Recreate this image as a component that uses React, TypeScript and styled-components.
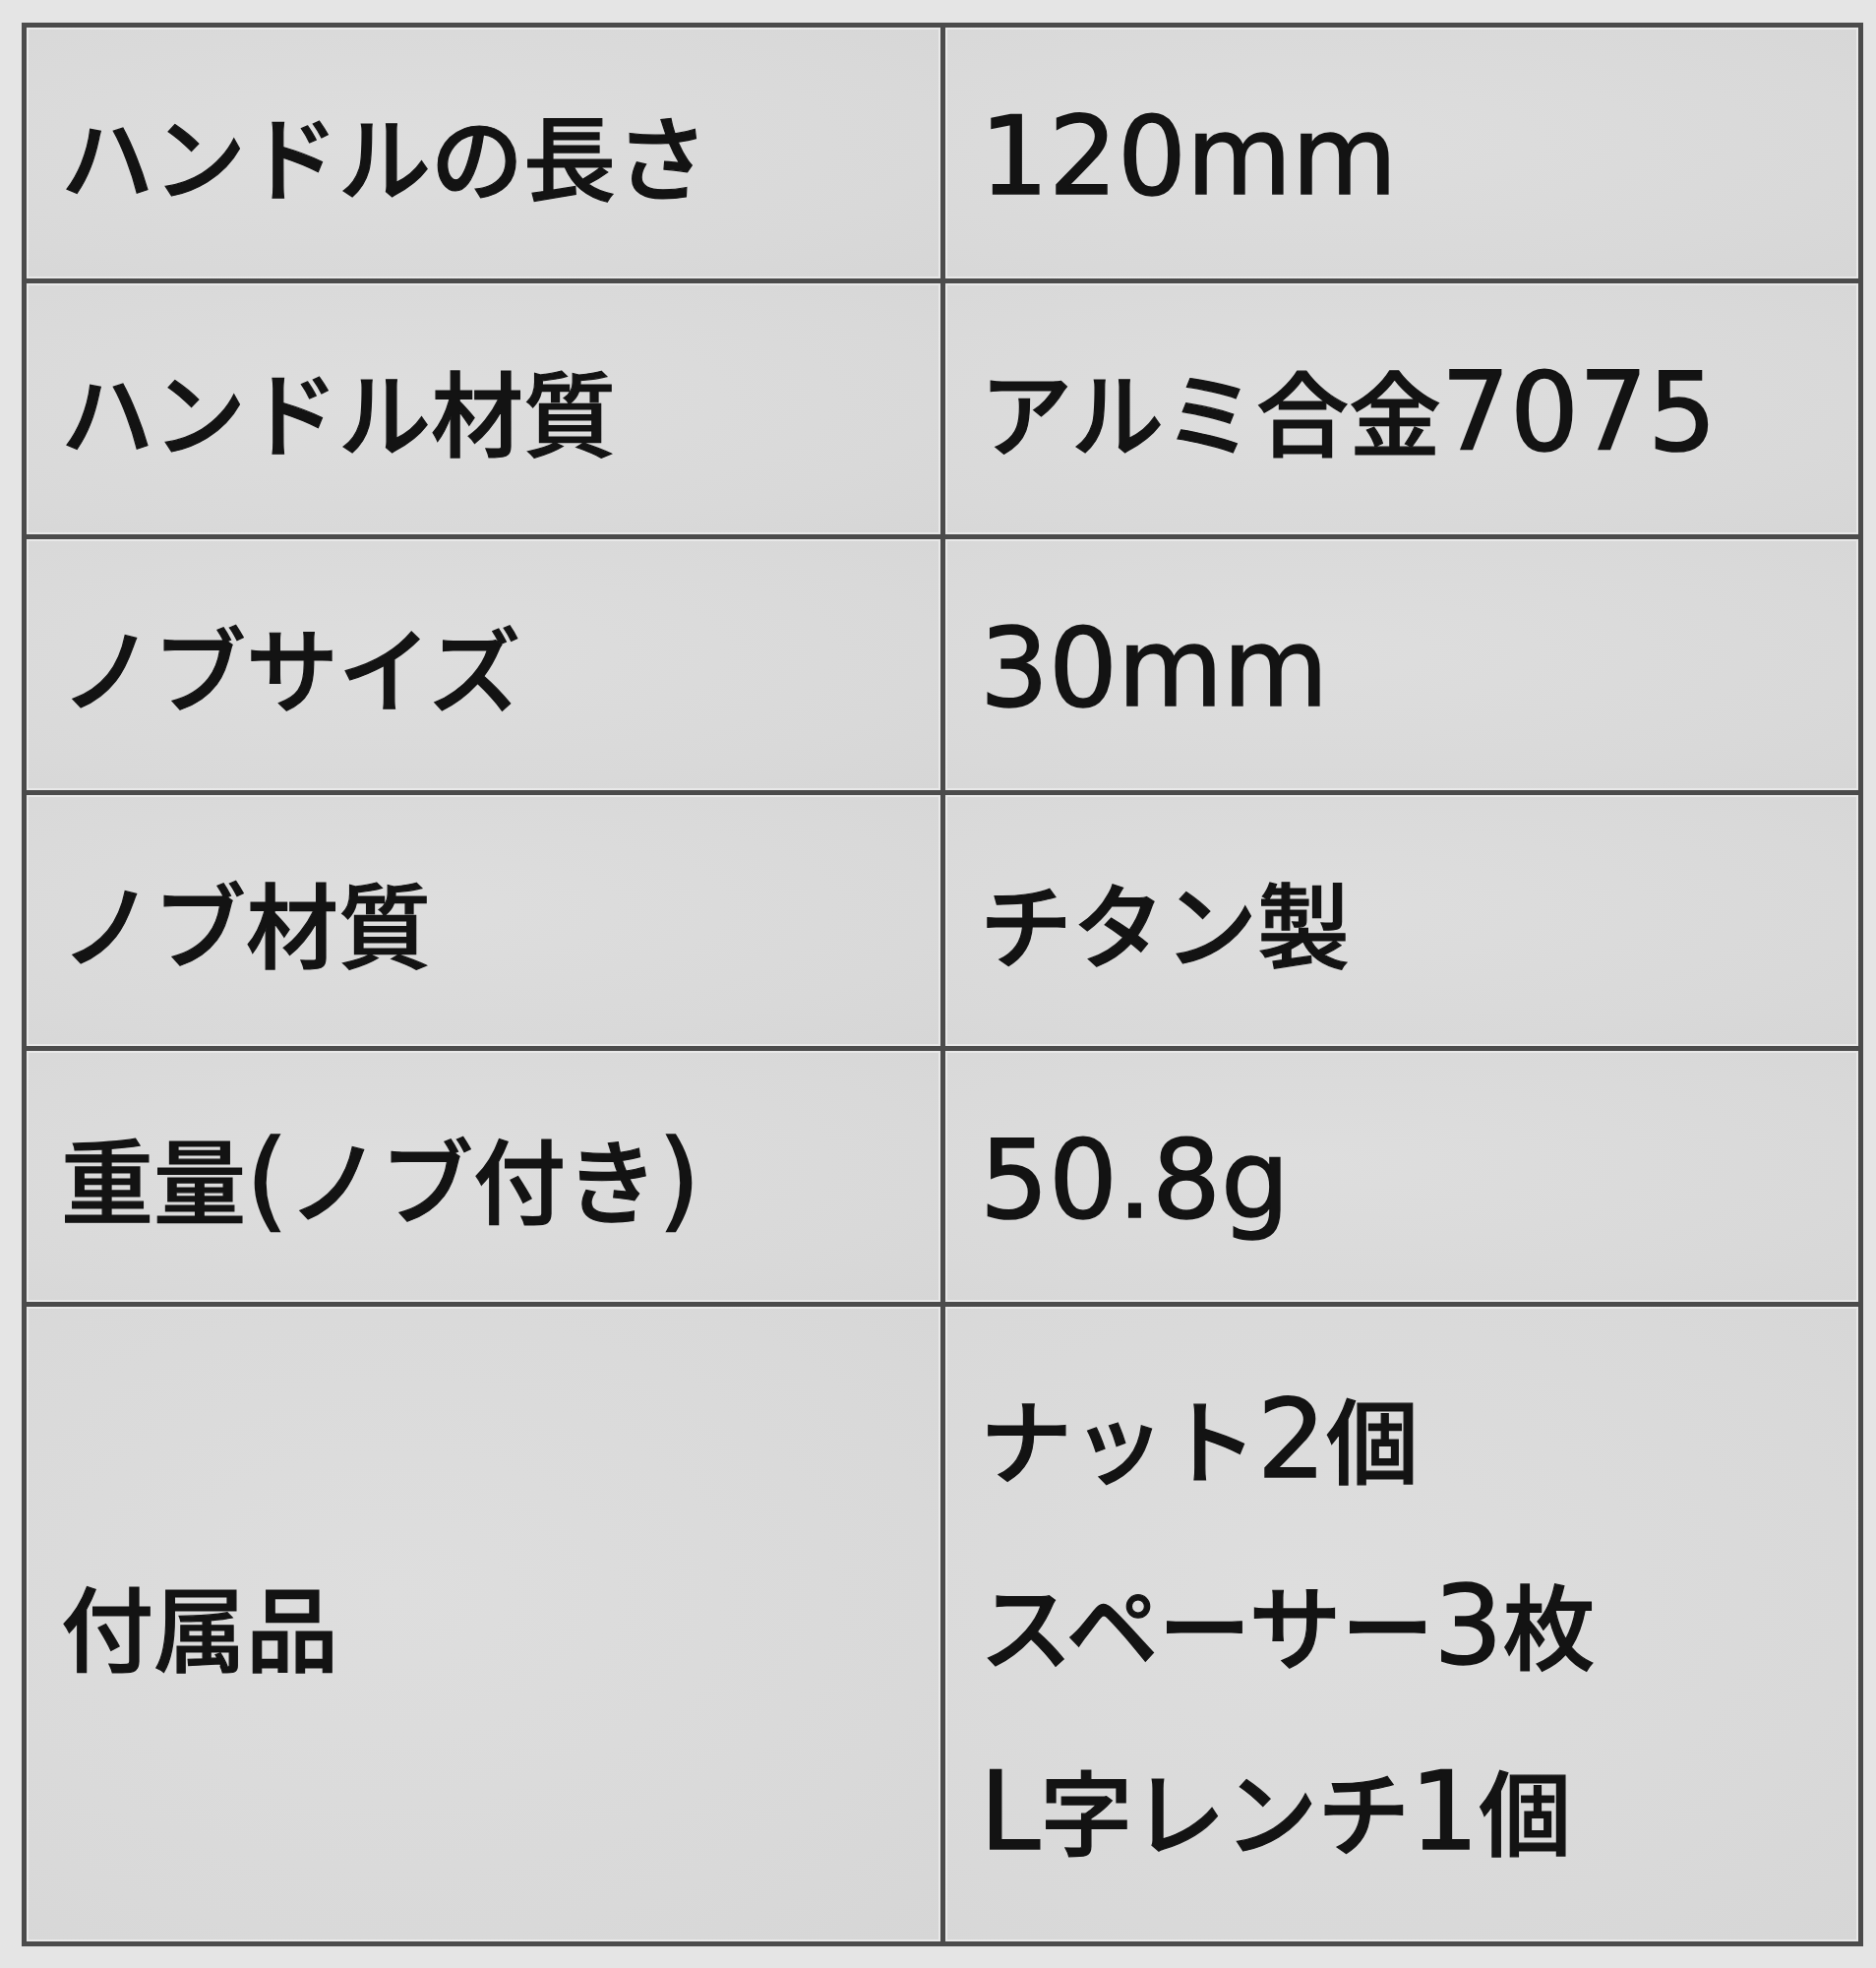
import React from "react";
import styled, { createGlobalStyle } from "styled-components";

const GlobalStyle = createGlobalStyle`
  html, body {
    margin: 0;
    padding: 0;
    background: #e5e5e5;
  }
  #root {
    width: 1907px;
    min-height: 2000px;
  }
`;

const Page = styled.div`
  width: 1907px;
  height: 2000px;
  padding: 23px 0 0 22px;
  box-sizing: border-box;
  background: #e5e5e5;
`;

const SpecTable = styled.div`
  display: grid;
  width: 1872px;
  grid-template-columns: 929px 928px;
  grid-template-rows: repeat(5, 255px) 645px;
  gap: 5px;
  border: 5px solid #4b4b4b;
  background: #4b4b4b;
  box-sizing: border-box;
  font-family: "Noto Sans CJK JP", sans-serif;
  font-weight: 500;
  font-size: 94px;
  color: #131313;
  -webkit-text-stroke: 1.2px #131313;
`;

const Cell = styled.div`
  display: flex;
  flex-direction: column;
  justify-content: center;
  padding-left: 35px;
  background: radial-gradient(ellipse at 40% 45%, #dedede 0%, #d9d9d9 70%, #d6d6d6 100%);
  box-shadow: inset 0 0 0 2px rgba(238, 238, 238, 0.75);
  white-space: nowrap;
`;

const Line = styled.div`
  line-height: 186px;
`;

const Latin = styled.span`
  font-family: "DejaVu Sans", sans-serif;
  font-weight: 400;
  font-size: 110px;
  -webkit-text-stroke: 1.6px #131313;
`;

function Text({ children }: { children: string }) {
  const parts = children.split(/([A-Za-z0-9.()]+)/).filter(Boolean);
  return (
    <>
      {parts.map((p, i) =>
        /^[A-Za-z0-9.()]+$/.test(p) ? <Latin key={i}>{p}</Latin> : <span key={i}>{p}</span>
      )}
    </>
  );
}

const rows: { label: string; value: string[] }[] = [
  { label: "ハンドルの長さ", value: ["120mm"] },
  { label: "ハンドル材質", value: ["アルミ合金7075"] },
  { label: "ノブサイズ", value: ["30mm"] },
  { label: "ノブ材質", value: ["チタン製"] },
  { label: "重量(ノブ付き)", value: ["50.8g"] },
  { label: "付属品", value: ["ナット2個", "スペーサー3枚", "L字レンチ1個"] },
];

export default function App() {
  return (
    <>
      <GlobalStyle />
      <Page>
        <SpecTable>
          {rows.map((r) => (
            <React.Fragment key={r.label}>
              <Cell>
                <div>
                  <Text>{r.label}</Text>
                </div>
              </Cell>
              <Cell>
                {r.value.length > 1 ? (
                  r.value.map((v) => (
                    <Line key={v}>
                      <Text>{v}</Text>
                    </Line>
                  ))
                ) : (
                  <div>
                    <Text>{r.value[0]}</Text>
                  </div>
                )}
              </Cell>
            </React.Fragment>
          ))}
        </SpecTable>
      </Page>
    </>
  );
}
